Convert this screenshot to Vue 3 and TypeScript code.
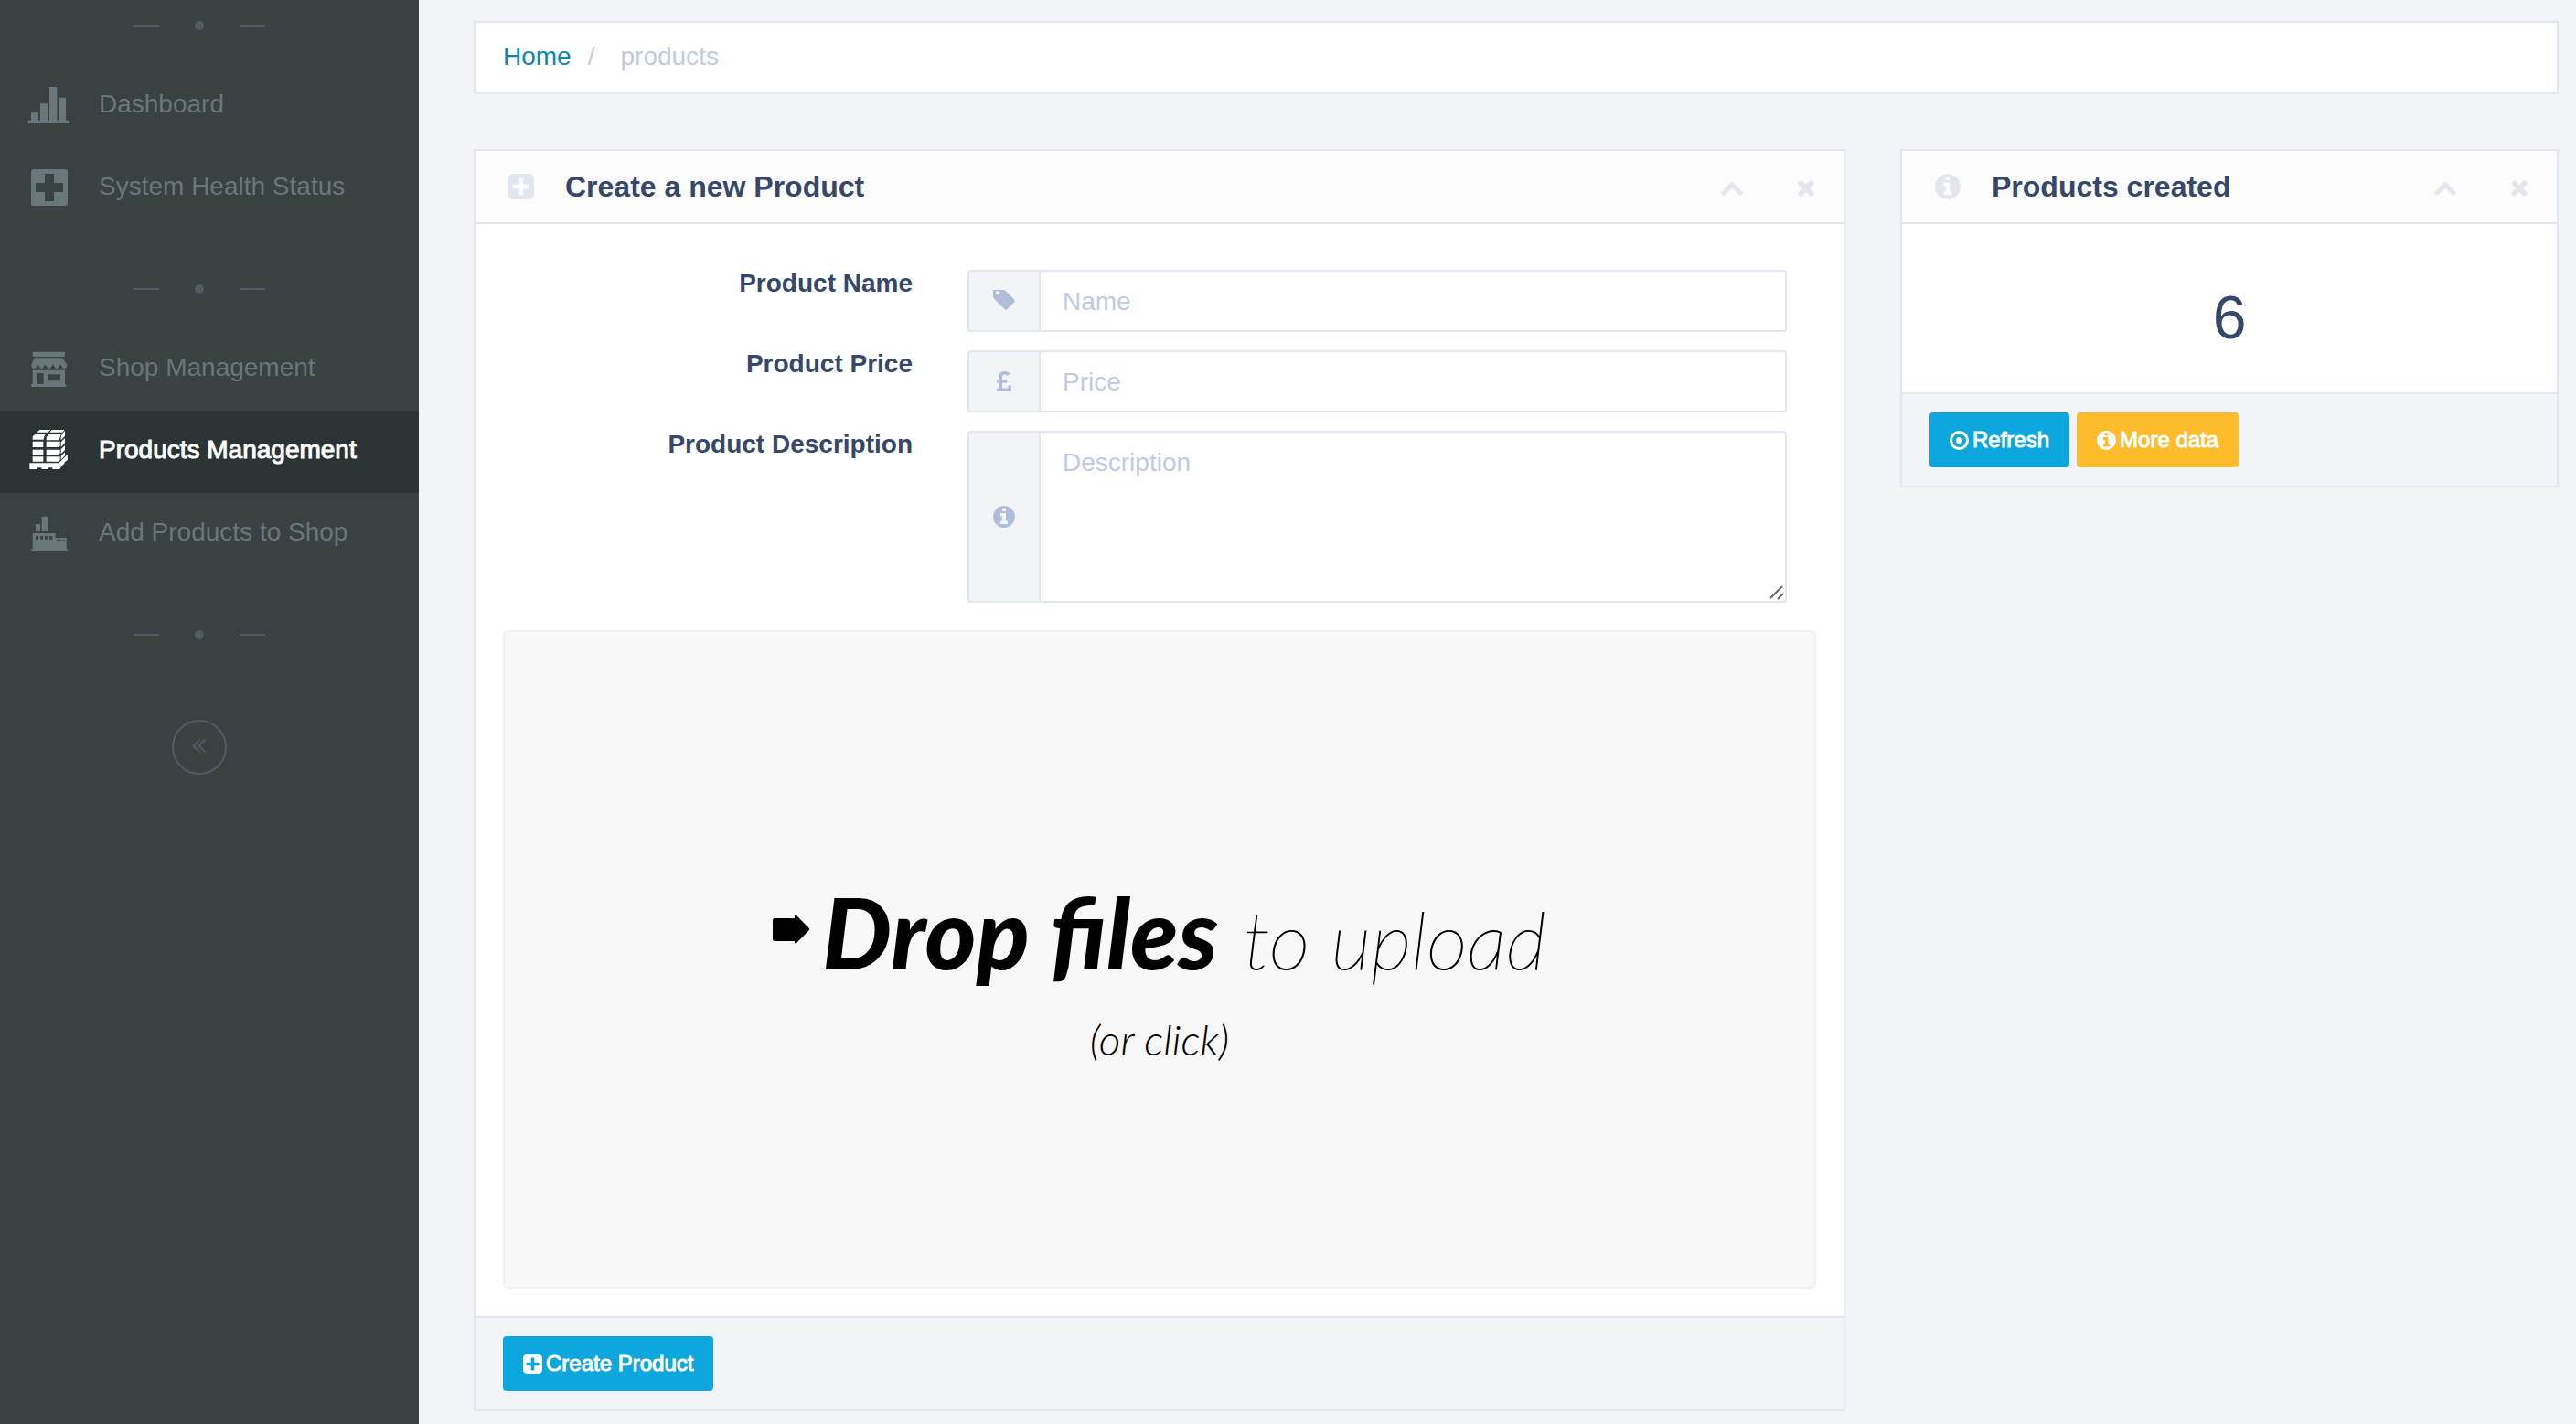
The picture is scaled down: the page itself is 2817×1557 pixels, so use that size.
<script setup lang="ts">
import { ref } from 'vue'

interface NavItem {
  label: string
  viewBox: string
  path: string
  active?: boolean
}

const navGroups: NavItem[][] = [
  [
    {
      label: 'Dashboard',
      viewBox: '90 276 144 144',
      path: 'M102 370h24v25h6v-55h24v55h6V285h25v110h5v-75h24v75h12v10H93v-10h9z',
    },
    {
      label: 'System Health Status',
      viewBox: '90 546 144 144',
      path: 'M112 555h100q10 0 10 10v100q0 10 -10 10h-100q-10 0 -10 -10v-100q0 -10 10 -10zM147 570v30h-30v30h30v30h30v-30h30v-30h-30v-30z',
    },
  ],
  [
    {
      label: 'Shop Management',
      viewBox: '90 120 144 144',
      path: 'M110 134h100q3 0 3 3v10q0 3 -3 3h-100q-3 0 -3 -3v-10q0 -3 3 -3zM113 154h93l12 20q3 6 -1 11q-7 7 -13 0l-4 -8h-3l-5 9q-6 6 -12 0l-5 -9h-3l-5 9q-6 6 -12 0l-5 -9h-3l-5 9q-6 6 -12 0l-4 -9h-3l-5 8q-6 7 -13 0q-4 -5 -1 -11zM107 194h106v46h4v9H102v-9h5zM122 204v36h21v-36zM156 208v21h42v-21z',
    },
    {
      label: 'Products Management',
      viewBox: '90 390 144 144',
      active: true,
      path: 'M132 388h36l-10 10h-37zM172 388h41l-8 10h-42zM118 402h34q-8 6 -9 20h-36v-10zM163 402h38l-6 18l-4 4h-39v-10zM107 428h35v19h-35zM152 428h45v15l-6 4h-39zM107 455h35v17h-35zM152 455h45v13l-6 4h-39zM107 478h35v16h-35zM152 478h45v11l-5 5h-40zM204 403l9 -10v17l-13 14v-12zM200 430l13 -13v16l-13 14zM200 454l13 -13v15l-13 13zM200 476l13 -13v12l-13 13zM97 499h96l24 -24v-4h5v17l-11 9v4l-7 5l-8 13h-24v-5h-14v5h-22v-5h-13v5H97z',
    },
    {
      label: 'Add Products to Shop',
      viewBox: '90 660 144 144',
      path: 'M137 674h20v49h-20zM117 699h15v24h-15zM107 729h75v15h36v37h4v8H102v-8h5zM117 738v11h9v-11zM132 738v11h9v-11zM147 738v11h10v-11zM162 738v11h10v-11zM187 749v5h5v-5zM197 749v5h5v-5zM207 749v5h5v-5z',
    },
  ],
]

const glyphs = {
  info: 'M1024 160v160q0 14 -9 23t-23 9h-96v512q0 14 -9 23t-23 9h-320q-14 0 -23 -9t-9 -23v-160q0 -14 9 -23t23 -9h96v-320h-96q-14 0 -23 -9t-9 -23v-160q0 -14 9 -23t23 -9h448q14 0 23 9t9 23zM896 1056v160q0 14 -9 23t-23 9h-192q-14 0 -23 -9t-9 -23v-160q0 -14 9 -23t23 -9h192q14 0 23 9t9 23zM1536 640q0 -209 -103 -385.5t-279.5 -279.5t-385.5 -103t-385.5 103t-279.5 279.5t-103 385.5t103 385.5t279.5 279.5t385.5 103t385.5 -103t279.5 -279.5t103 -385.5z',
  plus: 'M1280 576v128q0 26 -19 45t-45 19h-320v320q0 26 -19 45t-45 19h-128q-26 0 -45 -19t-19 -45v-320h-320q-26 0 -45 -19t-19 -45v-128q0 -26 19 -45t45 -19h320v-320q0 -26 19 -45t45 -19h128q26 0 45 19t19 45v320h320q26 0 45 19t19 45zM1536 1120v-960q0 -119 -84.5 -203.5t-203.5 -84.5h-960q-119 0 -203.5 84.5t-84.5 203.5v960q0 119 84.5 203.5t203.5 84.5h960q119 0 203.5 -84.5t84.5 -203.5z',
  tag: 'M448 1088q0 53 -37.5 90.5t-90.5 37.5t-90.5 -37.5t-37.5 -90.5t37.5 -90.5t90.5 -37.5t90.5 37.5t37.5 90.5zM1515 512q0 -53 -37 -90l-491 -492q-39 -37 -91 -37q-53 0 -90 37l-715 716q-38 37 -64.5 101t-26.5 117v416q0 52 38 90t90 38h416q53 0 117 -26.5t102 -64.5l715 -714q37 -39 37 -91z',
  pound: 'M1020 399v-367q0 -14 -9 -23t-23 -9h-956q-14 0 -23 9t-9 23v150q0 13 9.5 22.5t22.5 9.5h97v383h-95q-14 0 -23 9.5t-9 22.5v131q0 14 9 23t23 9h95v223q0 171 123.5 282t314.5 111q185 0 335 -125q9 -8 10 -20.5t-7 -22.5l-103 -127q-9 -11 -22 -12q-13 -2 -23 7q-5 5 -26 19t-69 32t-93 18q-85 0 -137 -47t-52 -123v-215h305q13 0 22.5 -9t9.5 -23v-131q0 -13 -9.5 -22.5t-22.5 -9.5h-305v-379h414v181q0 13 9 22.5t23 9.5h162q14 0 23 -9.5t9 -22.5z',
}

const name = ref('')
const price = ref('')
const description = ref('')
const created = ref(6)
</script>

<template>
  <div class="app">
    <aside class="sidebar">
      <nav>
        <template v-for="(group, g) in navGroups" :key="g">
          <div class="divider"><i class="dash"></i><i class="dot"></i><i class="dash"></i></div>
          <ul class="nav-list">
            <li v-for="item in group" :key="item.label">
              <a href="#" class="nav-link" :class="{ active: item.active }">
                <svg :viewBox="item.viewBox" aria-hidden="true"><path :d="item.path" fill-rule="evenodd" /></svg>
                <span>{{ item.label }}</span>
              </a>
            </li>
          </ul>
        </template>
        <div class="divider"><i class="dash"></i><i class="dot"></i><i class="dash"></i></div>
      </nav>
      <div class="collapse">
        <button type="button" class="collapse-btn" aria-label="Collapse menu">
          <svg viewBox="0 0 16 18" aria-hidden="true"><path d="M8.500 1.500L1.500 8.500L8.500 15.500M14.500 1.500L7.500 8.500L14.500 15.500" /></svg>
        </button>
      </div>
    </aside>

    <main class="main">
      <ol class="breadcrumb">
        <li><a href="#">Home</a></li>
        <li class="slash" aria-hidden="true">/</li>
        <li>products</li>
      </ol>

      <div class="columns">
        <section class="panel">
          <header class="panel-head">
            <svg class="head-icon" viewBox="0 -1408 1536 1536" aria-hidden="true"><path transform="scale(1,-1)" :d="glyphs.plus" /></svg>
            <h2>Create a new Product</h2>
            <button type="button" class="tool" aria-label="Collapse panel">
              <svg class="chevron" viewBox="0 0 24 15"><path d="M3 12L12 3L21 12" /></svg>
            </button>
            <button type="button" class="tool" aria-label="Close panel">
              <svg class="cross" viewBox="0 0 18 18"><path d="M3.500 3.500L14.500 14.500M14.500 3.500L3.500 14.500" /></svg>
            </button>
          </header>
          <form id="product-form" class="panel-body" @submit.prevent>
            <div class="field">
              <label for="name">Product Name</label>
              <div class="group">
                <span class="addon"><svg viewBox="0 -1280 1536 1536" aria-hidden="true"><path transform="scale(1,-1)" :d="glyphs.tag" /></svg></span>
                <input id="name" v-model="name" type="text" placeholder="Name" />
              </div>
            </div>
            <div class="field">
              <label for="price">Product Price</label>
              <div class="group">
                <span class="addon"><svg viewBox="-258 -1472 1536 1536" aria-hidden="true"><path transform="scale(1,-1)" :d="glyphs.pound" /></svg></span>
                <input id="price" v-model="price" type="text" placeholder="Price" />
              </div>
            </div>
            <div class="field">
              <label for="description">Product Description</label>
              <div class="group">
                <span class="addon"><svg viewBox="0 -1408 1536 1536" aria-hidden="true"><path transform="scale(1,-1)" :d="glyphs.info" /></svg></span>
                <textarea id="description" v-model="description" placeholder="Description"></textarea>
                <svg class="grip" viewBox="0 0 16 16" aria-hidden="true"><path d="M1 14L14 1M9 15L15 9" /></svg>
              </div>
            </div>
            <label class="dropzone">
              <input type="file" class="file-input" multiple />
              <span class="drop-line">
                <svg class="arrow" viewBox="0 0 40 32" aria-hidden="true"><path d="M2 4H24V1Q25 0 26 1L39 14Q41 16 39 18L26 31Q25 32 24 31V29H2Q0 29 0 27V6Q0 4 2 4Z" /></svg>
                <strong>Drop files</strong>
                <span class="thin">to upload</span>
              </span>
              <span class="drop-sub">(or click)</span>
            </label>
          </form>
          <footer class="panel-foot">
            <button type="submit" form="product-form" class="btn primary">
              <svg viewBox="0 -1408 1536 1536" aria-hidden="true"><path transform="scale(1,-1)" :d="glyphs.plus" /></svg>
              Create Product
            </button>
          </footer>
        </section>

        <section class="panel">
          <header class="panel-head">
            <svg class="head-icon" viewBox="0 -1408 1536 1536" aria-hidden="true"><path transform="scale(1,-1)" :d="glyphs.info" /></svg>
            <h2>Products created</h2>
            <button type="button" class="tool" aria-label="Collapse panel">
              <svg class="chevron" viewBox="0 0 24 15"><path d="M3 12L12 3L21 12" /></svg>
            </button>
            <button type="button" class="tool" aria-label="Close panel">
              <svg class="cross" viewBox="0 0 18 18"><path d="M3.500 3.500L14.500 14.500M14.500 3.500L3.500 14.500" /></svg>
            </button>
          </header>
          <p class="count">{{ created }}</p>
          <footer class="panel-foot">
            <button type="button" class="btn primary">
              <svg viewBox="0 0 21 21" aria-hidden="true"><circle cx="10.500" cy="10.500" r="9" fill="none" stroke="currentColor" stroke-width="3" /><circle cx="10.500" cy="10.500" r="3.500" /></svg>
              Refresh
            </button>
            <button type="button" class="btn warning">
              <svg viewBox="0 -1408 1536 1536" aria-hidden="true"><path transform="scale(1,-1)" :d="glyphs.info" /></svg>
              More data
            </button>
          </footer>
        </section>
      </div>
    </main>
  </div>
</template>

<style>
body {
  margin: 0;
  background: #f3f4f8;
}
</style>

<style scoped>
* {
  box-sizing: border-box;
}
.app {
  display: flex;
  min-height: 100vh;
  font-family: "Liberation Sans", Arial, sans-serif;
  font-size: 28px;
  line-height: 40px;
  color: #36476a;
}
svg {
  display: block;
  flex: none;
  fill: currentColor;
}
button {
  font: inherit;
  cursor: pointer;
}

/* Sidebar */
.sidebar {
  flex: none;
  width: 458px;
  background: #394142;
  color: #68787a;
}
.nav-list {
  margin: 0;
  padding: 0;
  list-style: none;
}
.divider {
  display: flex;
  align-items: center;
  justify-content: space-between;
  width: 144px;
  margin-left: 146px;
  padding: 60px 0 38px;
}
.divider:first-child {
  padding-top: 23px;
}
.dash {
  width: 28px;
  height: 2px;
  background: #505c61;
}
.dot {
  width: 10px;
  height: 10px;
  border-radius: 50%;
  background: #505c61;
}
.nav-link {
  display: flex;
  align-items: center;
  gap: 30px;
  height: 90px;
  padding: 0 30px;
  color: inherit;
  text-decoration: none;
}
.nav-link svg {
  width: 48px;
  height: 48px;
}
.nav-link span {
  padding-bottom: 4px;
}
.nav-link.active {
  background: #2c3334;
  color: #fff;
}
.nav-link.active span {
  -webkit-text-stroke: 1px currentColor;
}
.collapse {
  display: flex;
  justify-content: center;
  width: 436px;
  padding-top: 50px;
}
.collapse-btn {
  display: flex;
  align-items: center;
  justify-content: center;
  width: 60px;
  height: 60px;
  padding: 0 0 2px;
  border: 2px solid #505c61;
  border-radius: 50%;
  background: none;
  color: #505c61;
}
.collapse-btn svg {
  width: 16px;
  height: 18px;
  fill: none;
  stroke: currentColor;
  stroke-width: 2;
}

/* Content */
.main {
  flex: 1;
  min-width: 0;
  padding: 23px 19px 14px 60px;
}
.breadcrumb {
  display: flex;
  height: 80px;
  margin: 0 0 60px;
  padding: 17px 30px 19px;
  list-style: none;
  border: 2px solid #e2e7ef;
  background: #fff;
  color: #c1cbe0;
}
.breadcrumb a {
  color: #0e86b0;
  text-decoration: none;
}
.slash {
  padding: 0 28px 0 18px;
  color: #ccc;
}
.columns {
  display: grid;
  grid-template-columns: 25fr 12fr;
  gap: 60px;
  align-items: start;
}
.panel {
  border: 2px solid #e2e7ef;
  background: #fff;
}
.panel-head {
  display: flex;
  align-items: center;
  height: 80px;
  padding: 0 32px 0 36px;
  border-bottom: 2px solid #e2e7ef;
  background: #fcfcfc;
}
.head-icon {
  width: 28px;
  height: 28px;
  color: #e2e7ef;
}
h2 {
  flex: 1;
  margin: 0 0 0 34px;
  font-size: 32px;
  line-height: 40px;
}
.tool {
  padding: 4px 0 0;
  border: 0;
  background: none;
  color: #e2e7ef;
}
.tool + .tool {
  margin-left: 60px;
}
.tool svg {
  fill: none;
  stroke: currentColor;
  stroke-linecap: round;
  stroke-linejoin: round;
}
.chevron {
  width: 24px;
  height: 15px;
  stroke-width: 5;
}
.cross {
  width: 18px;
  height: 18px;
  stroke-width: 6;
}
.panel-body {
  padding: 50px 30px 30px;
}
.field {
  display: grid;
  grid-template-columns: 1fr 2fr;
  gap: 60px;
  margin-bottom: 20px;
  padding-right: 32px;
}
.field label {
  font-weight: bold;
  line-height: 30px;
  text-align: right;
}
.group {
  position: relative;
  display: flex;
}
.addon {
  display: flex;
  align-items: center;
  justify-content: center;
  width: 78px;
  border: 2px solid #e2e7ef;
  border-right-width: 0;
  border-radius: 4px 0 0 4px;
  background: #f3f4f8;
  color: #b0bdd8;
}
.addon svg {
  width: 24px;
  height: 24px;
}
.group input,
.group textarea {
  flex: 1;
  min-width: 0;
  height: 68px;
  margin: 0;
  padding: 13px 24px 11px;
  border: 2px solid #e2e7ef;
  border-radius: 0 4px 4px 0;
  background: #fff;
  color: #36476a;
  font: inherit;
  outline: 0;
}
.group textarea {
  height: 188px;
  resize: none;
}
.group ::placeholder {
  color: #c1cbe0;
  opacity: 1;
}
.grip {
  position: absolute;
  right: 3px;
  bottom: 3px;
  width: 16px;
  height: 16px;
  fill: none;
  stroke: #666;
  stroke-width: 2;
}
.dropzone {
  position: relative;
  display: flex;
  flex-direction: column;
  align-items: center;
  justify-content: center;
  height: 720px;
  margin-top: 30px;
  padding-top: 28px;
  border: 2px solid #f1f1f1;
  border-radius: 6px;
  background: #f8f8f8;
  color: #000;
  font-family: Lato, sans-serif;
  font-style: italic;
  cursor: pointer;
}
.file-input {
  position: absolute;
  width: 1px;
  height: 1px;
  opacity: 0;
}
.drop-line {
  display: flex;
  align-items: baseline;
  line-height: 120px;
}
.arrow {
  width: 40px;
  height: 32px;
  margin: 0 14px 14px 0;
  align-self: center;
}
.drop-line strong {
  font-size: 107px;
  font-weight: 900;
}
.thin {
  margin-left: 28px;
  font-size: 87px;
  font-weight: 100;
  -webkit-text-stroke: 1px currentColor;
}
.drop-sub {
  margin-top: 20px;
  font-size: 46px;
  font-weight: 300;
  line-height: 60px;
}
.panel-foot {
  display: flex;
  gap: 8px;
  padding: 20px 30px;
  border-top: 2px solid #e2e7ef;
  background: #f3f4f8;
}
.btn {
  display: flex;
  align-items: center;
  gap: 4px;
  height: 60px;
  padding: 0 22px;
  border: 0;
  border-radius: 4px;
  color: #fff;
  font-size: 24px;
  -webkit-text-stroke: 1px currentColor;
}
.btn svg {
  width: 21px;
  height: 21px;
}
.primary {
  background: #0ea7dd;
}
.warning {
  background: #fdbc2b;
}
.count {
  margin: 0;
  padding: 70px 0 50px;
  font-size: 66px;
  line-height: 64px;
  text-align: center;
}
</style>
